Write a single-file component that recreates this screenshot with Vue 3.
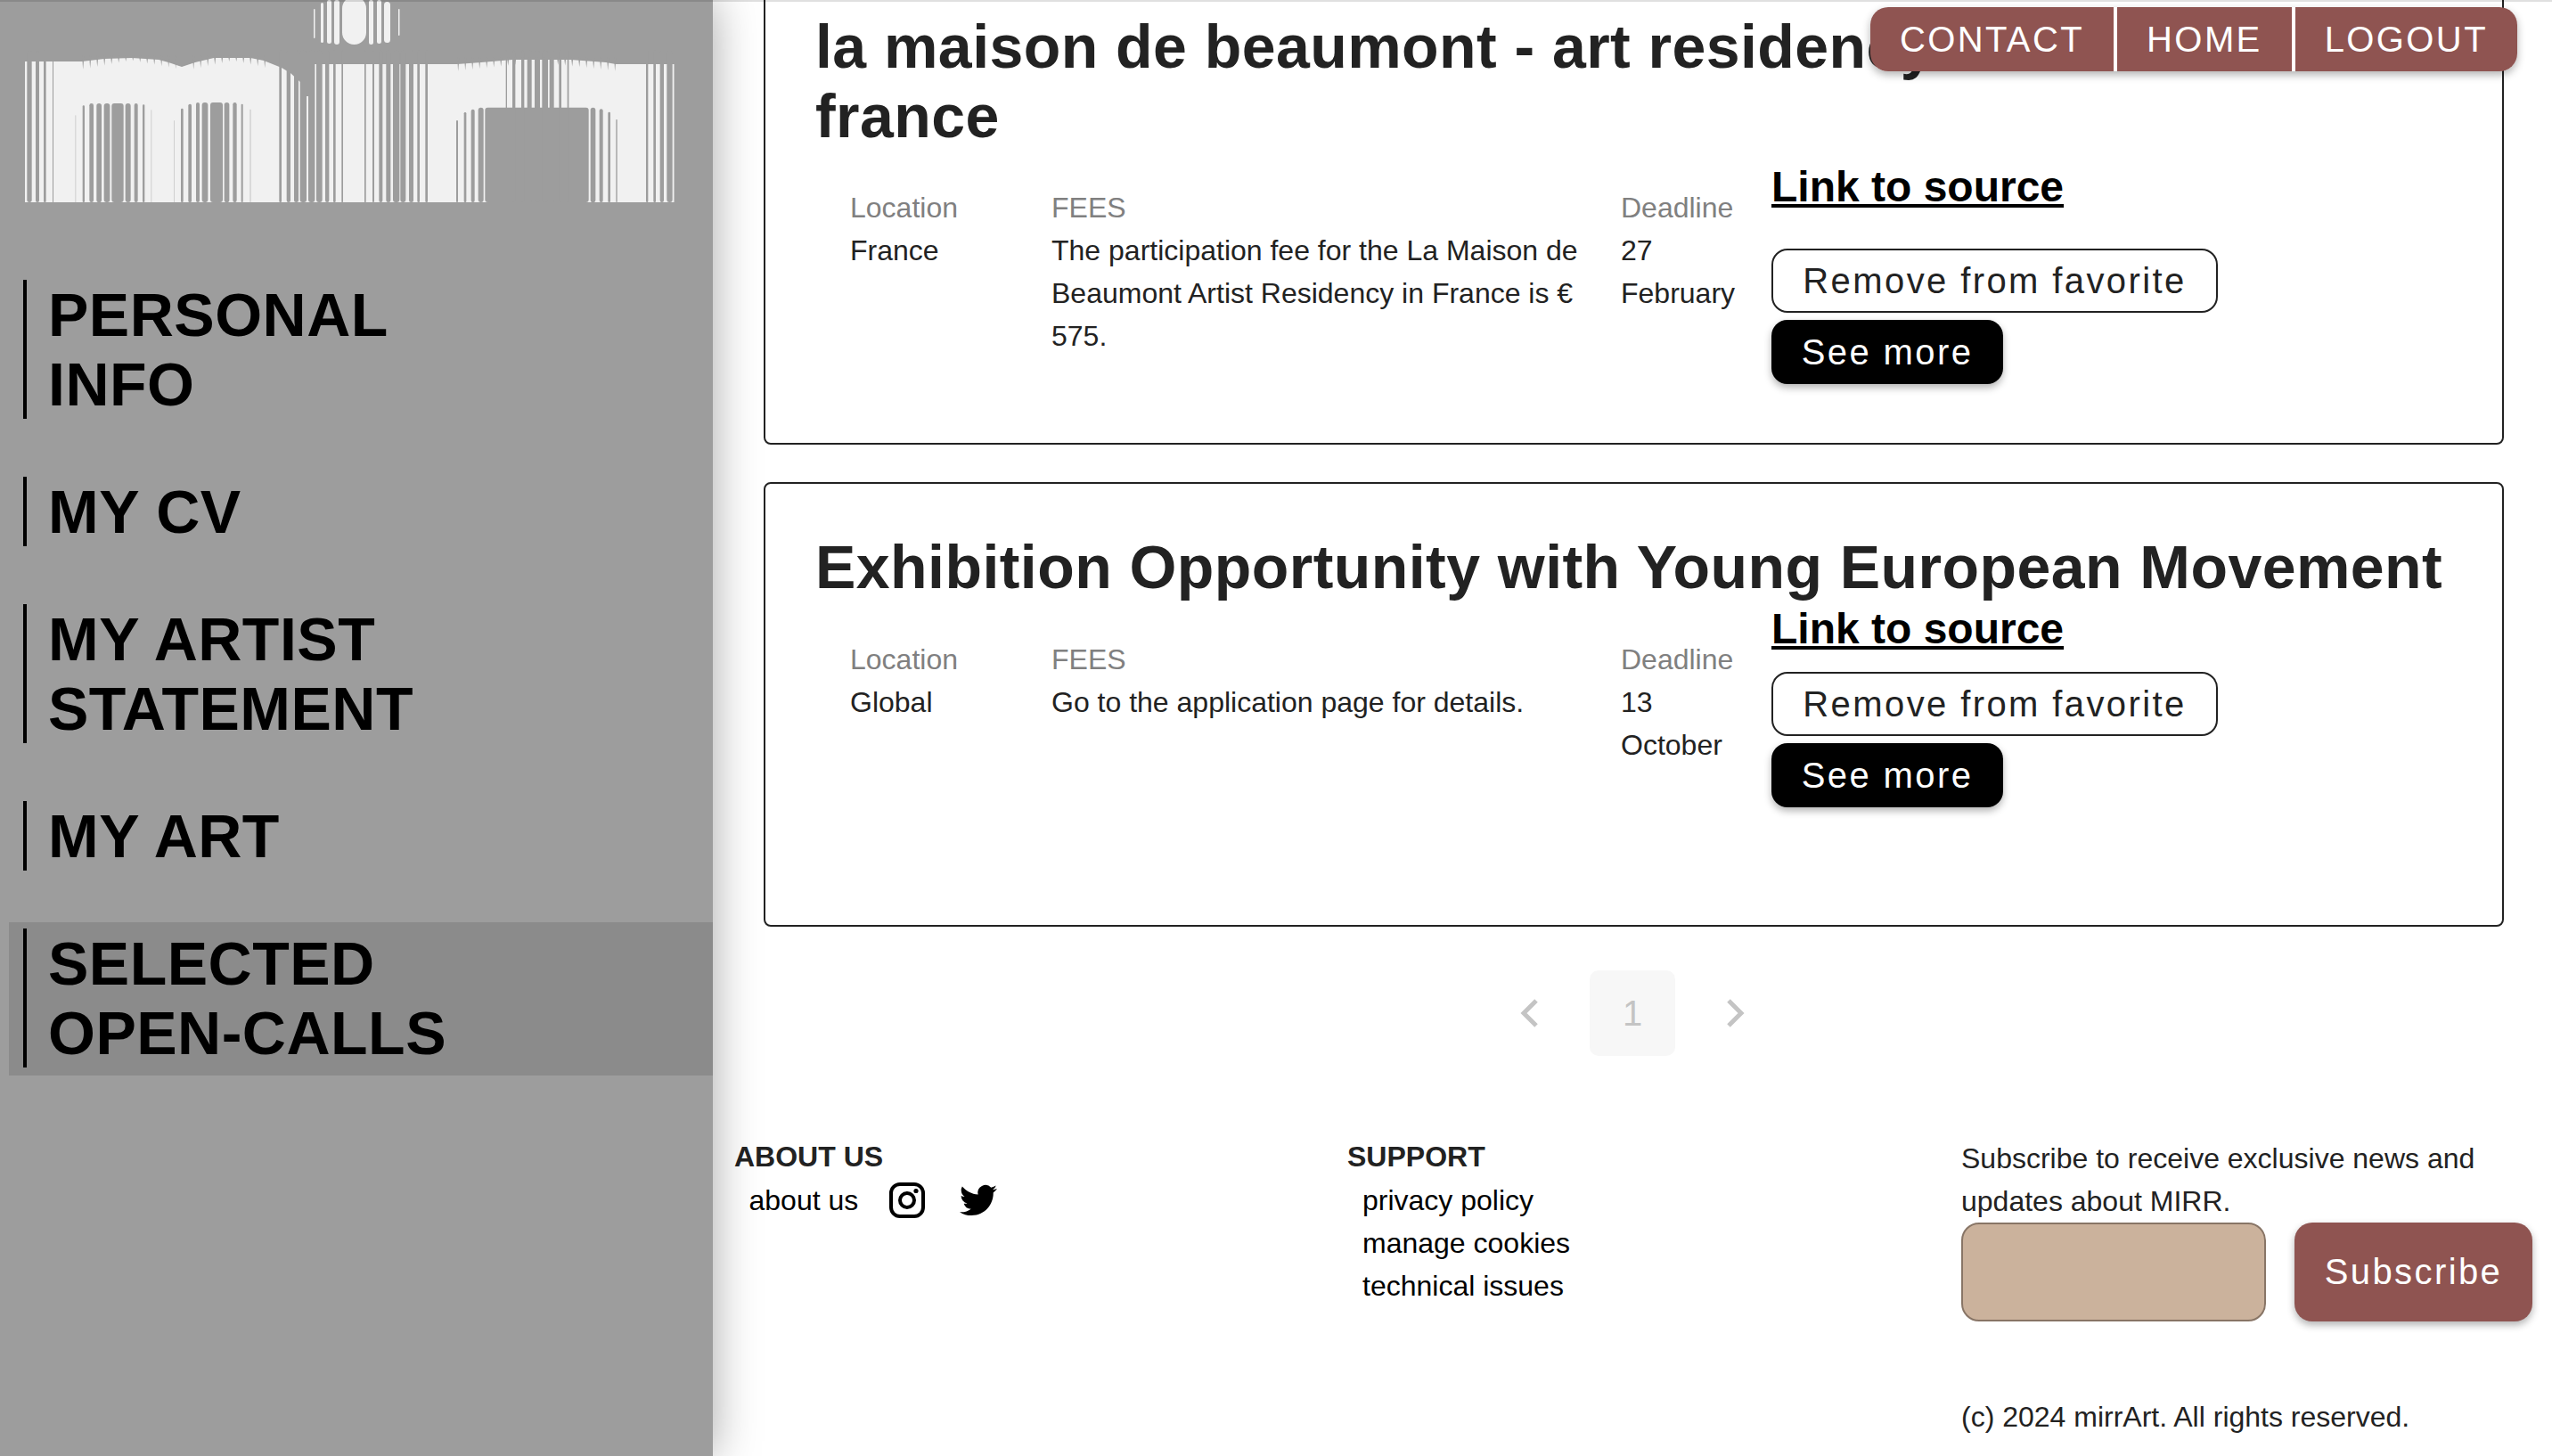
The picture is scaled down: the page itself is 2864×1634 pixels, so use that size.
<script setup>
const navItems = [
  { label: 'PERSONAL INFO' },
  { label: 'MY CV' },
  { label: 'MY ARTIST STATEMENT' },
  { label: 'MY ART' },
  { label: 'SELECTED OPEN-CALLS', active: true }
]

// Logo: a white silhouette cut by vertical slits. [from, to, top] in crop units.
const fromA = ([a, b, t, faint]) => ({ x: 20 + a / 3, w: (b - a) / 3, y: 90 + t / 3, faint })
const fromB = ([a, b, t, faint]) => ({ x: 390 + a / 3, w: (b - a) / 3, y: 90 + t / 3, faint })

const slits = [
  ...[
    [31, 47, -100], [60, 72, -100], [87, 95, -100], [117, 120, -100],
    [193, 196, 118, true], [218, 225, 85], [241, 255, 78], [265, 282, 78], [290, 310, 78], [316, 356, 78],
    [362, 380, 78], [392, 404, 78], [420, 427, 82], [448, 451, 100, true], [525, 528, 135, true],
    [549, 557, 95], [574, 585, 80], [600, 612, 75], [620, 640, 75], [648, 690, 75], [695, 712, 75],
    [724, 737, 75], [752, 758, 80], [781, 785, 98, true],
    [880, 888, -100], [905, 918, -100], [930, 945, -100], [950, 972, -100], [978, 1000, -100],
    [1005, 1025, -100], [1035, 1048, -100], [1062, 1070, -100], [1090, 1095, -100]
  ].map(fromA),
  ...[
    [57, 62, -100], [84, 90, -100], [106, 118, -100], [130, 145, -100], [153, 175, -100], [178, 196, -100],
    [207, 222, -100], [235, 243, -100], [262, 270, -100],
    [366, 372, 135], [392, 400, 108], [416, 428, 98], [440, 458, 92], [463, 812, 92],
    [818, 835, 92], [848, 860, 97], [877, 885, 107], [904, 908, 132],
    [533, 537, -100], [555, 565, -100], [585, 595, -100], [605, 620, -100], [630, 648, -100],
    [655, 675, -100], [680, 695, -100], [712, 720, -100], [740, 745, -100],
    [1005, 1012, -100], [1030, 1038, -100], [1052, 1065, -100], [1075, 1094, -100]
  ].map(fromB)
]

const notches = []
const addNotches = (from, to, top, step) => {
  const mid = (from + to) / 2
  for (let x = from; x < to; x += step) {
    const depth = 2 + (Math.abs(x - mid) / ((to - from) / 2)) * 10
    notches.push(`${x},${top - 4} ${x + 2.4},${top - 4} ${x + 1.2},${top + depth}`)
  }
}
addNotches(92, 200, 66, 8)
addNotches(216, 304, 66, 8)
addNotches(513, 690, 68, 8)

const dotBars = [
  { x: 352, w: 1.5, y: 10, h: 33 },
  { x: 360, w: 3, y: 3, h: 45 },
  { x: 367, w: 5, y: 0, h: 49 },
  { x: 375, w: 6, y: 0, h: 50 },
  { x: 384, w: 27, y: -4, h: 54 },
  { x: 414, w: 5, y: 0, h: 50 },
  { x: 423, w: 5, y: 0, h: 49 },
  { x: 431, w: 7, y: 2, h: 46 },
  { x: 447, w: 1.5, y: 10, h: 30 }
]

const cards = [
  {
    title: 'la maison de beaumont - art residency in france',
    variant: 'first',
    location: 'France',
    fees: 'The participation fee for the La Maison de Beaumont Artist Residency in France is € 575.',
    deadline: '27 February'
  },
  {
    title: 'Exhibition Opportunity with Young European Movement',
    variant: 'second',
    location: 'Global',
    fees: 'Go to the application page for details.',
    deadline: '13 October'
  }
]

const support = ['privacy policy', 'manage cookies', 'technical issues']
</script>

<template>
  <div class="page">
    <aside class="sidebar">
      <svg class="logo" viewBox="0 0 800 307" aria-label="mirr logo">
        <path
          fill="#f1f1f1"
          d="M28 227 V69 H92 L117 66 L148 65 L178 67 L189 70 L204 75 L219 70 L240 65 L281 65 L296 68 L306 72 L316 76 L326 82 L337 92 L344 108 L353 108 V72 H513 L540 70 L575 67 L640 67 L680 70 L691 72 H756.5 V227 Z"
        />
        <rect
          v-for="(s, i) in slits"
          :key="'s' + i"
          :x="s.x"
          :y="s.y"
          :width="s.w"
          :height="227 - s.y"
          :rx="Math.min(s.w / 2, 3)"
          :fill="s.faint ? '#cfcfcf' : '#9d9d9d'"
        />
        <rect x="20" y="227" width="760" height="8" fill="#9d9d9d" />
        <polygon v-for="(n, i) in notches" :key="'n' + i" :points="n" fill="#9d9d9d" />
        <rect
          v-for="(b, i) in dotBars"
          :key="'d' + i"
          :x="b.x"
          :y="b.y"
          :width="b.w"
          :height="b.h"
          :rx="b.w / 2"
          fill="#f1f1f1"
        />
      </svg>
      <nav class="side-nav">
        <a v-for="item in navItems" :key="item.label" class="side-item" :class="{ active: item.active }">
          <span class="side-label"><span class="side-text">{{ item.label }}</span></span>
        </a>
      </nav>
    </aside>

    <main class="main">
      <div class="top-menu">
        <a class="top-link">CONTACT</a>
        <a class="top-link">HOME</a>
        <a class="top-link">LOGOUT</a>
      </div>

      <section v-for="card in cards" :key="card.title" class="card" :class="card.variant">
        <h2 class="title">{{ card.title }}</h2>
        <div class="card-row">
          <div class="info">
            <div class="col col-loc">
              <div class="label">Location</div>
              <div class="value">{{ card.location }}</div>
            </div>
            <div class="col col-fee">
              <div class="label">FEES</div>
              <div class="value">{{ card.fees }}</div>
            </div>
            <div class="col col-date">
              <div class="label">Deadline</div>
              <div class="value">{{ card.deadline }}</div>
            </div>
          </div>
          <div class="actions">
            <a class="source">Link to source</a>
            <button class="btn-outline">Remove from favorite</button>
            <button class="btn-dark">See more</button>
          </div>
        </div>
      </section>

      <div class="pager">
        <span class="pager-cell">
          <svg width="30" height="40" viewBox="0 0 30 40"><path d="M23 6 L9 20 L23 34" /></svg>
        </span>
        <span class="pager-cell current">1</span>
        <span class="pager-cell">
          <svg width="30" height="40" viewBox="0 0 30 40"><path d="M7 6 L21 20 L7 34" /></svg>
        </span>
      </div>

      <footer class="footer">
        <div class="foot-col">
          <div class="foot-head">ABOUT US</div>
          <div class="about-row">
            <span>about us</span>
            <svg class="insta" width="40" height="40" viewBox="0 0 40 40">
              <rect x="2" y="2" width="36" height="36" rx="10" fill="none" stroke="#000" stroke-width="4" />
              <circle cx="20" cy="20" r="8" fill="none" stroke="#000" stroke-width="4" />
              <circle cx="30" cy="9.5" r="2.6" fill="#000" />
            </svg>
            <svg class="bird" width="42" height="42" viewBox="0 0 24 24">
              <path
                d="M23.953 4.57a10 10 0 01-2.825.775 4.958 4.958 0 002.163-2.723c-.951.555-2.005.959-3.127 1.184a4.92 4.92 0 00-8.384 4.482C7.69 8.095 4.067 6.13 1.64 3.162a4.822 4.822 0 00-.666 2.475c0 1.71.87 3.213 2.188 4.096a4.904 4.904 0 01-2.228-.616v.06a4.923 4.923 0 003.946 4.827 4.996 4.996 0 01-2.212.085 4.936 4.936 0 004.604 3.417 9.867 9.867 0 01-6.102 2.105c-.39 0-.779-.023-1.17-.067a13.995 13.995 0 007.557 2.209c9.053 0 13.998-7.496 13.998-13.985 0-.21 0-.42-.015-.63A9.935 9.935 0 0024 4.59z"
                fill="#000"
              />
            </svg>
          </div>
        </div>
        <div class="foot-col">
          <div class="foot-head">SUPPORT</div>
          <div v-for="s in support" :key="s" class="foot-link">{{ s }}</div>
        </div>
        <div class="foot-col subscribe">
          <p class="sub-text">Subscribe to receive exclusive news and updates about MIRR.</p>
          <div class="sub-form">
            <input class="sub-input" type="text" />
            <button class="sub-btn">Subscribe</button>
          </div>
          <p class="copy">(c) 2024 mirrArt. All rights reserved.</p>
        </div>
      </footer>
    </main>
  </div>
</template>

<style>
html,
body {
  margin: 0;
  background: #fff;
}
</style>

<style scoped>
.page {
  display: flex;
  width: 2864px;
  height: 1634px;
  overflow: hidden;
  position: relative;
  font-family: "Liberation Sans", Arial, sans-serif;
  color: #222;
}
.page::before {
  content: "";
  position: absolute;
  inset: 0 0 auto 0;
  height: 2px;
  background: rgba(0, 0, 0, 0.12);
  z-index: 5;
}
.sidebar {
  width: 800px;
  flex: none;
  background: #9d9d9d;
  box-shadow: 0 0 48px rgba(0, 0, 0, 0.35);
  position: relative;
  z-index: 2;
}
.logo {
  display: block;
  width: 800px;
  height: 307px;
}
.side-nav {
  display: flex;
  flex-direction: column;
  gap: 49px;
  padding-left: 10px;
}
.side-item {
  display: block;
  padding: 8px 0 8px 16px;
}
.side-item.active {
  background: #8b8b8b;
}
.side-label {
  display: block;
  border-left: 4px solid #000;
  padding-left: 24px;
  width: 500px;
}
.side-text {
  display: block;
  margin: -1px 0 1px;
  font-size: 68px;
  line-height: 78px;
  letter-spacing: 0.5px;
  font-weight: 700;
  color: #000;
}
.main {
  flex: 1;
  min-width: 0;
  position: relative;
}
.top-menu {
  position: absolute;
  top: 8px;
  right: 39px;
  display: flex;
  gap: 4px;
  z-index: 3;
  border-radius: 20px;
  box-shadow: 0 4px 10px rgba(0, 0, 0, 0.3);
  overflow: hidden;
}
.top-link {
  background: #8f5451;
  color: #fff;
  font-size: 40px;
  line-height: 72px;
  letter-spacing: 2.4px;
  padding: 0 33px;
}
.card {
  box-sizing: border-box;
  margin: 0 54px 0 57px;
  border: 2px solid #222;
  border-radius: 8px;
  padding: 54px 56px 0;
}
.card.first {
  margin-top: -43px;
  height: 542px;
}
.card.second {
  margin-top: 42px;
  height: 499px;
}
.title {
  margin: 0;
  font-size: 68px;
  line-height: 78px;
  letter-spacing: 0.45px;
  font-weight: 700;
  color: #222;
}
.first .title {
  max-width: 1400px;
}
.card-row {
  display: flex;
  align-items: flex-start;
}
.info {
  width: 1073px;
  flex: none;
  box-sizing: border-box;
  padding-left: 39px;
  display: grid;
  grid-template-columns: 226px 639px 168px;
  font-size: 32px;
  line-height: 48px;
}
.first .info {
  margin-top: 40px;
}
.second .info {
  margin-top: 40.5px;
}
.col-fee {
  padding-right: 24px;
}
.col-date {
  padding-right: 16px;
}
.label {
  color: #808080;
}
.value {
  color: #222;
}
.actions {
  display: flex;
  flex-direction: column;
  align-items: flex-start;
}
.first .actions {
  margin-top: 13px;
}
.second .actions {
  margin-top: 3px;
}
.source {
  font-size: 48px;
  line-height: 55px;
  font-weight: 700;
  color: #000;
  text-decoration: underline;
}
.btn-outline,
.btn-dark {
  font-family: inherit;
  font-size: 40px;
  letter-spacing: 2.4px;
  height: 72px;
  box-sizing: border-box;
  border-radius: 18px;
  padding: 0;
  cursor: pointer;
  white-space: nowrap;
}
.btn-outline {
  background: #fff;
  color: #222;
  border: 2px solid #222;
  width: 501px;
}
.first .btn-outline {
  margin-top: 42px;
}
.second .btn-outline {
  margin-top: 21px;
}
.btn-dark {
  margin-top: 8px;
  background: #000;
  color: #fff;
  border: 0;
  width: 260px;
  box-shadow: 0 4px 8px rgba(0, 0, 0, 0.3);
}
.pager {
  display: flex;
  justify-content: center;
  gap: 20px;
  margin-top: 49px;
}
.pager-cell {
  width: 96px;
  height: 96px;
  display: flex;
  align-items: center;
  justify-content: center;
  font-size: 40px;
  color: #c4c4c4;
  border-radius: 10px;
}
.pager-cell.current {
  background: #f7f7f7;
}
.pager-cell path {
  fill: none;
  stroke: #c4c4c4;
  stroke-width: 5;
}
.footer {
  display: grid;
  grid-template-columns: 688px 689px 1fr;
  margin-top: 89px;
  padding-left: 24px;
  font-size: 32px;
  line-height: 48px;
  color: #222;
}
.foot-head {
  font-weight: 700;
  margin-bottom: 1px;
}
.about-row {
  display: flex;
  align-items: center;
  padding-left: 16.5px;
  color: #000;
}
.insta {
  margin-left: 35px;
}
.bird {
  margin-left: 39px;
}
.foot-link {
  padding-left: 17px;
  color: #000;
}
.subscribe {
  padding-top: 2px;
  padding-right: 22px;
}
.sub-text {
  margin: 0;
  width: 600px;
}
.sub-form {
  display: flex;
  align-items: stretch;
  gap: 32px;
}
.sub-input {
  box-sizing: border-box;
  width: 342px;
  height: 111px;
  background: #cbb29c;
  border: 2px solid #887566;
  border-radius: 20px;
  padding: 0;
}
.sub-btn {
  width: 267px;
  height: 111px;
  background: #8f5451;
  color: #fff;
  border: 0;
  border-radius: 20px;
  font-family: inherit;
  font-size: 40px;
  letter-spacing: 2.4px;
  box-shadow: 0 4px 8px rgba(0, 0, 0, 0.3);
}
.copy {
  margin: 83px 0 0;
}
</style>
